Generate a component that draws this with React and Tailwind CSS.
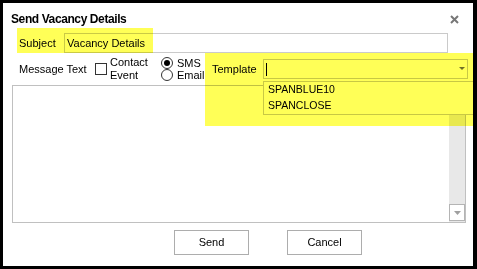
export default function App() {
  return (
    <div className="w-[477px] h-[269px] bg-black pt-[3px] pl-[3px] pr-[4px] pb-[3px]">
      <div
        className="relative w-[470px] h-[263px] bg-white overflow-hidden text-[11px] text-black"
        style={{ fontFamily: '"Liberation Sans", Arial, sans-serif' }}
      >
        {/* header */}
        <div className="flex items-center justify-between h-[16px] mt-[8px] pl-[8px] pr-[14px]">
          <span className="text-[12px] font-bold tracking-[-0.4px]">Send Vacancy Details</span>
          <svg width="9" height="9" viewBox="0 0 9 9">
            <path d="M1 1 L8 8 M8 1 L1 8" stroke="#777" strokeWidth="2" />
          </svg>
        </div>

        {/* subject */}
        <div className="flex items-center h-[20px] mt-[6px] pl-[16px]">
          <span className="w-[45px]">Subject</span>
          <div className="w-[384px] h-[20px] border border-[#cacaca] flex items-center pl-[2px]">
            Vacancy Details
          </div>
        </div>

        {/* message options */}
        <div className="flex items-center h-[24px] mt-[4px] pl-[16px]">
          <span className="w-[76px]">Message Text</span>
          <div className="w-[12px] h-[12px] border border-[#333] bg-white" />
          <div className="w-[51px] ml-[3px] leading-[13px]">
            <div>Contact</div>
            <div>Event</div>
          </div>
          <div className="w-[51px] flex flex-col">
            <label className="flex items-center h-[12px] gap-[4px]">
              <span className="w-[12px] h-[12px] rounded-full border border-[#333] flex items-center justify-center">
                <span className="w-[6px] h-[6px] rounded-full bg-black" />
              </span>
              SMS
            </label>
            <label className="flex items-center h-[12px] gap-[4px]">
              <span className="w-[12px] h-[12px] rounded-full border border-[#333]" />
              Email
            </label>
          </div>
          <span className="w-[51px]">Template</span>
          <div className="relative w-[205px] h-[20px] border border-[#c8c8c8] flex items-center pl-[2px]">
            <span className="w-px h-[13px] bg-black" />
            <svg className="absolute right-[2px] top-[7px]" width="6" height="4" viewBox="0 0 6 4">
              <path d="M0 0 H6 L3 3 Z" fill="#707070" />
            </svg>
          </div>
        </div>

        {/* message text area */}
        <div className="mt-[4px] ml-[9px] w-[454px] h-[138px] border border-[#c0c0c0] flex justify-end">
          <div className="w-[16px] h-full bg-[#e8e8e8] flex flex-col justify-end pb-px">
            <div className="w-[16px] h-[17px] border border-[#b4b4b4] bg-white flex items-center justify-center">
              <svg width="7" height="4" viewBox="0 0 7 4">
                <path d="M0 0 H7 L3.5 4 Z" fill="#a0a0a0" />
              </svg>
            </div>
          </div>
        </div>

        {/* buttons */}
        <div className="flex gap-[38px] mt-[7px] pl-[171px]">
          <button className="w-[75px] h-[25px] border border-[#adadad] bg-white text-[11px]">Send</button>
          <button className="w-[75px] h-[25px] border border-[#adadad] bg-white text-[11px]">Cancel</button>
        </div>

        {/* template dropdown list */}
        <div className="absolute left-[260px] top-[78px] w-[220px] h-[34px] border border-[#c8c8c8] bg-white text-[10.5px]">
          <div className="h-[16px] flex items-center pl-[4px]">SPANBLUE10</div>
          <div className="h-[16px] flex items-center pl-[4px]">SPANCLOSE</div>
        </div>

        {/* highlighter marks */}
        <div className="absolute left-[14px] top-[25px] w-[136px] h-[25px] bg-[#ffff57] mix-blend-multiply" />
        <div className="absolute left-[202px] top-[50px] w-[268px] h-[73px] bg-[#ffff57] mix-blend-multiply" />
      </div>
    </div>
  );
}
